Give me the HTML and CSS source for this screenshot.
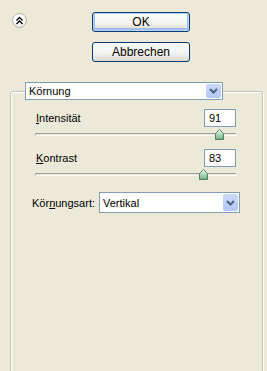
FILE: index.html
```html
<!DOCTYPE html>
<html lang="de">
  <head>
    <meta charset="UTF-8" />
    <meta name="viewport" content="width=device-width, initial-scale=1.0" />
    <link rel="stylesheet" href="styles.css">
    <title>Körnung</title>
  </head>
  <body>
    <div class="top">
      <button class="collapse" title="Einklappen">
        <svg width="9" height="9" viewBox="0 0 9 9">
          <path d="M1.5 4.5 L4.5 1.5 L7.5 4.5 M1.5 8 L4.5 5 L7.5 8" fill="none" stroke="#000" stroke-width="1.4"/>
        </svg>
      </button>
      <div class="actions">
        <button class="btn default">OK</button>
        <button class="btn">Abbrechen</button>
      </div>
    </div>

    <fieldset class="group">
      <legend>
        <div class="select wide">
          <span>Körnung</span>
          <span class="arrow">
            <svg width="9" height="6" viewBox="0 0 9 6"><path d="M1 1 L4.5 4.5 L8 1" fill="none" stroke="#4d6185" stroke-width="2"/></svg>
          </span>
        </div>
      </legend>

      <div class="params">
        <div class="param">
          <div class="param-head">
            <label><u>I</u>ntensität</label>
            <div class="num">91</div>
          </div>
          <div class="slider">
            <div class="track"></div>
            <svg class="thumb" style="left: 91%" width="9" height="11" viewBox="0 0 9 11">
              <defs>
                <linearGradient id="tg1" x1="0" y1="0" x2="0" y2="1">
                  <stop offset="0" stop-color="#f4fbf4"/>
                  <stop offset="1" stop-color="#6fae82"/>
                </linearGradient>
              </defs>
              <polygon points="4.5,0.5 8.5,4.5 8.5,10.5 0.5,10.5 0.5,4.5" fill="url(#tg1)" stroke="#4f8060"/>
            </svg>
          </div>
        </div>

        <div class="param">
          <div class="param-head">
            <label><u>K</u>ontrast</label>
            <div class="num">83</div>
          </div>
          <div class="slider">
            <div class="track"></div>
            <svg class="thumb" style="left: 83%" width="9" height="11" viewBox="0 0 9 11">
              <polygon points="4.5,0.5 8.5,4.5 8.5,10.5 0.5,10.5 0.5,4.5" fill="url(#tg1)" stroke="#4f8060"/>
            </svg>
          </div>
        </div>

        <div class="type-row">
          <label>Kör<u>n</u>ungsart:</label>
          <div class="select small">
            <span>Vertikal</span>
            <span class="arrow">
              <svg width="9" height="6" viewBox="0 0 9 6"><path d="M1 1 L4.5 4.5 L8 1" fill="none" stroke="#4d6185" stroke-width="2"/></svg>
            </span>
          </div>
        </div>
      </div>
    </fieldset>
  </body>
</html>
```

FILE: styles.css
```css
body {
    margin: 0;
    height: 371px;
    overflow: hidden;
    background: #ece9d8;
    font: 11px "Liberation Sans", Arial, sans-serif;
    color: #000;
}

/* Kopfbereich mit Knöpfen */
.top {
    display: flex;
    padding: 13px 0 0 12px;
}
.collapse {
    width: 15px;
    height: 15px;
    box-sizing: border-box;
    padding: 0;
    border: 1px solid #b5b3a8;
    border-radius: 50%;
    background: radial-gradient(circle at 45% 35%, #ffffff 40%, #dddbd2);
    display: flex;
    align-items: center;
    justify-content: center;
}
.actions {
    display: flex;
    flex-direction: column;
    gap: 10px;
    margin: -1px 0 0 65px;
}
.btn {
    width: 98px;
    height: 20px;
    box-sizing: border-box;
    padding: 0;
    border: 1px solid #003c74;
    border-radius: 3px;
    background: linear-gradient(#ffffff, #f4f4f0 55%, #dcd8cc);
    font: 12px "Liberation Sans", Arial, sans-serif;
    color: #000;
}
.btn.default {
    box-shadow: inset 0 0 0 1px #c2d4f6, inset 0 -1px 0 2px #9fbbec;
}

/* Gruppenrahmen */
.group {
    margin: 20px 4px 0 10px;
    padding: 0;
    height: 292px;
    border: 1px solid #c5c2b2;
    border-radius: 3px;
    box-shadow: inset 1px 1px 0 #fff, 1px 1px 0 #fff;
    min-width: 0;
}
.group legend {
    padding: 0;
    margin-left: 14px;
}

.select {
    box-sizing: border-box;
    border: 1px solid #7f9db9;
    background: #fff;
    display: flex;
    align-items: center;
    justify-content: space-between;
    padding-left: 3px;
}
.select.wide {
    width: 198px;
    height: 18px;
}
.select.small {
    width: 141px;
    height: 21px;
}
.arrow {
    width: 15px;
    align-self: stretch;
    margin: 1px;
    border-radius: 2px;
    background: linear-gradient(#cbdaf9, #b3c8f5);
    display: flex;
    align-items: center;
    justify-content: center;
}

.params {
    padding: 9px 26px 0 25px;
}
.param-head {
    display: flex;
    align-items: center;
    justify-content: space-between;
}
.num {
    width: 32px;
    height: 18px;
    box-sizing: border-box;
    border: 1px solid #7f9db9;
    background: #fff;
    padding: 2px 0 0 4px;
}

/* Schieberegler */
.slider {
    position: relative;
    height: 11px;
    margin: 2px -1px 9px -1px;
}
.track {
    position: relative;
    top: 4px;
    height: 1px;
    border: 1px solid;
    border-color: #a19f92 #fff #fff #a19f92;
    border-radius: 2px;
}
.thumb {
    position: absolute;
    top: 0;
    margin-left: -4px;
}

.type-row {
    display: flex;
    align-items: center;
    gap: 4px;
    margin: 12px -4px 0 -4px;
}
.type-row label {
    flex: 1;
}
```
